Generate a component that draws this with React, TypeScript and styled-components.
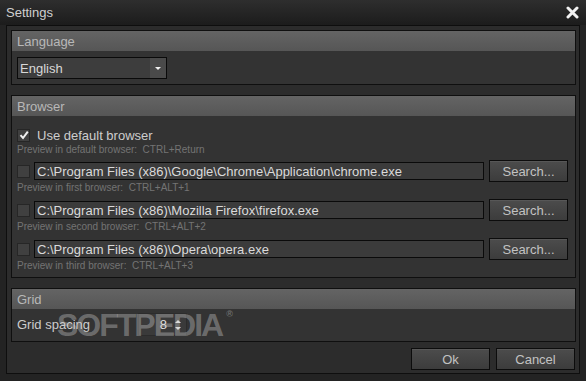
import styled, { createGlobalStyle } from "styled-components"

const GlobalStyle = createGlobalStyle`
  html, body {
    margin: 0;
    padding: 0;
    background: #232323;
  }
  * {
    box-sizing: border-box;
  }
`

const Window = styled.div`
  width: 586px;
  height: 381px;
  display: flex;
  flex-direction: column;
  background: #232323;
  font-family: "Liberation Sans", Arial, sans-serif;
  font-size: 13px;
  color: #cdcdcd;
  overflow: hidden;
`

const TitleBar = styled.div`
  height: 25px;
  flex: none;
  display: flex;
  align-items: center;
  justify-content: space-between;
  padding: 0 7px 1px 6px;
  background: linear-gradient(#2e2e2e, #1c1c1c);
  color: #cfcfcf;
`

const CloseButton = styled.div`
  width: 13px;
  height: 13px;
  display: flex;
  margin-top: 1px;
`

const Body = styled.div`
  flex: 1;
  margin: 0 6px 7px 6px;
  border: 1px solid #0e0e0e;
  background: #2c2c2c;
  padding: 4px 3px 3px 4px;
  display: flex;
  flex-direction: column;
  position: relative;
`

const Panel = styled.div<{ $gap?: number }>`
  border: 1px solid #0f0f0f;
  background: #333333;
  margin-top: ${(p) => p.$gap ?? 0}px;
  display: flex;
  flex-direction: column;
`

const PanelHeader = styled.div`
  height: 20px;
  padding-left: 5px;
  display: flex;
  align-items: center;
  background: linear-gradient(#646464, #565656);
  color: #b8b8b8;
`

const PanelBody = styled.div<{ $pad: string }>`
  padding: ${(p) => p.$pad};
  display: flex;
  flex-direction: column;
`

const Combo = styled.div`
  width: 150px;
  height: 22px;
  border: 1px solid #0a0a0a;
  background: #3d3d3d;
  display: flex;
  align-items: center;
  color: #d8d8d8;
`

const ComboText = styled.span`
  flex: 1;
  padding-left: 2px;
`

const ComboArrow = styled.div`
  width: 16px;
  height: 100%;
  background: #4a4a4a;
  display: flex;
  align-items: center;
  justify-content: center;
  &::after {
    content: "";
    border-left: 3px solid transparent;
    border-right: 3px solid transparent;
    border-top: 3px solid #f2f2f2;
  }
`

const CheckRow = styled.div`
  height: 18px;
  display: flex;
  align-items: center;
  gap: 7px;
`

const Box = styled.div`
  width: 13px;
  height: 13px;
  flex: none;
  border: 1px solid #262626;
  background: #404040;
  display: flex;
  align-items: center;
  justify-content: center;
`

const Hint = styled.div<{ $after: number }>`
  height: 12px;
  line-height: 12px;
  font-size: 10px;
  color: #747474;
  margin-bottom: ${(p) => p.$after}px;
  white-space: pre;
`

const PathRow = styled.div`
  height: 22px;
  display: flex;
  align-items: center;
`

const PathInput = styled.div`
  width: 450px;
  height: 18px;
  margin-left: 4px;
  border: 1px solid #0a0a0a;
  background: #3b3b3b;
  color: #dadada;
  display: flex;
  align-items: center;
  padding-left: 2px;
  white-space: nowrap;
  overflow: hidden;
`

const Button = styled.div`
  width: 79px;
  height: 22px;
  border: 1px solid #0c0c0c;
  background: linear-gradient(#4c4c4c, #3c3c3c);
  color: #c2c2c2;
  display: flex;
  align-items: center;
  justify-content: center;
  box-shadow: inset 0 1px 0 #575757;
`

const SearchButton = styled(Button)`
  margin-left: 5px;
`

const GridRow = styled.div`
  height: 23px;
  display: flex;
  align-items: center;
`

const GridLabel = styled.span`
  width: 121px;
`

const SpinBox = styled.div`
  width: 49px;
  height: 23px;
  background: #3a3a3a;
  border: 1px solid #2c2c2c;
  display: flex;
  align-items: center;
  justify-content: flex-end;
  padding-right: 5px;
  gap: 8px;
  color: #e0e0e0;
`

const SpinArrows = styled.div`
  display: flex;
  flex-direction: column;
  gap: 4px;
  &::before,
  &::after {
    content: "";
    border-left: 3px solid transparent;
    border-right: 3px solid transparent;
  }
  &::before {
    border-bottom: 3px solid #e6e6e6;
  }
  &::after {
    border-top: 3px solid #e6e6e6;
  }
`

const Footer = styled.div`
  flex: 1;
  display: flex;
  justify-content: flex-end;
  align-items: flex-start;
  padding: 6px 1px 0 0;
  gap: 6px;
`

const Watermark = styled.div`
  position: absolute;
  left: 50px;
  top: 281px;
  font-family: "Liberation Sans", Arial, sans-serif;
  font-weight: bold;
  font-size: 32px;
  letter-spacing: -2px;
  color: rgba(200, 200, 200, 0.4);
  pointer-events: none;
  sup {
    font-size: 9px;
    letter-spacing: 0;
    vertical-align: top;
    margin-left: 4px;
    position: relative;
    top: 2px;
  }
`

const Check = () => (
  <svg width="10" height="10" viewBox="0 0 10 10">
    <path d="M1.5 5.2 L4 8 L8.8 1.6" stroke="#f0f0f0" strokeWidth="2" fill="none" />
  </svg>
)

const browsers = [
  { path: "C:\\Program Files (x86)\\Google\\Chrome\\Application\\chrome.exe", hint: "Preview in first browser:  CTRL+ALT+1" },
  { path: "C:\\Program Files (x86)\\Mozilla Firefox\\firefox.exe", hint: "Preview in second browser:  CTRL+ALT+2" },
  { path: "C:\\Program Files (x86)\\Opera\\opera.exe", hint: "Preview in third browser:  CTRL+ALT+3" },
]

function App() {
  return (
    <Window>
      <GlobalStyle />
      <TitleBar>
        <span>Settings</span>
        <CloseButton>
          <svg width="13" height="13" viewBox="0 0 13 13">
            <path d="M2 2 L11 11 M11 2 L2 11" stroke="#f2f2f2" strokeWidth="3" strokeLinecap="round" />
          </svg>
        </CloseButton>
      </TitleBar>
      <Body>
        <Panel>
          <PanelHeader>Language</PanelHeader>
          <PanelBody $pad="6px 5px 5px 5px">
            <Combo>
              <ComboText>English</ComboText>
              <ComboArrow />
            </Combo>
          </PanelBody>
        </Panel>

        <Panel $gap={10}>
          <PanelHeader>Browser</PanelHeader>
          <PanelBody $pad="10px 5px 5px 5px">
            <CheckRow>
              <Box>
                <Check />
              </Box>
              <span>Use default browser</span>
            </CheckRow>
            <Hint $after={4}>Preview in default browser:  CTRL+Return</Hint>
            {browsers.map((b, i) => (
              <div key={b.path}>
                <PathRow>
                  <Box />
                  <PathInput>{b.path}</PathInput>
                  <SearchButton>Search...</SearchButton>
                </PathRow>
                <Hint $after={i < browsers.length - 1 ? 5 : 0}>{b.hint}</Hint>
              </div>
            ))}
          </PanelBody>
        </Panel>

        <Panel $gap={10}>
          <PanelHeader>Grid</PanelHeader>
          <PanelBody $pad="4px 5px 5px 5px">
            <GridRow>
              <GridLabel>Grid spacing</GridLabel>
              <SpinBox>
                <span>8</span>
                <SpinArrows />
              </SpinBox>
            </GridRow>
          </PanelBody>
        </Panel>

        <Footer>
          <Button>Ok</Button>
          <Button>Cancel</Button>
        </Footer>

        <Watermark>
          SOFTPEDIA<sup>®</sup>
        </Watermark>
      </Body>
    </Window>
  )
}

export default App
